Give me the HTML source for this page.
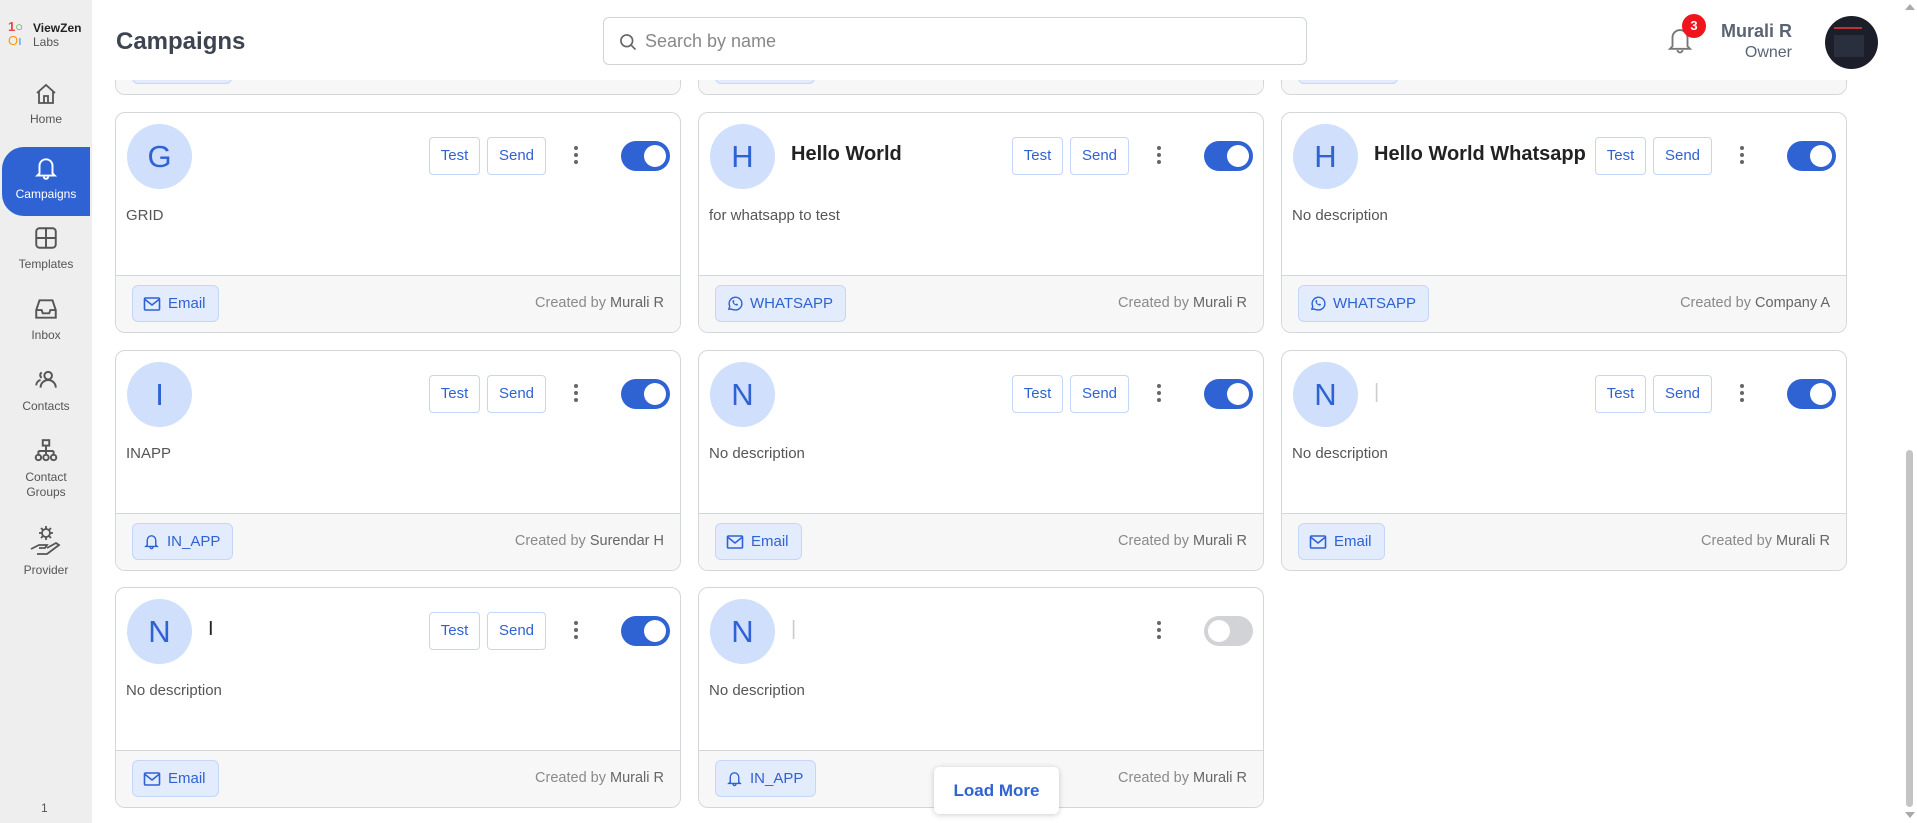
<!DOCTYPE html>
<html><head><meta charset="utf-8">
<style>
*{box-sizing:border-box;margin:0;padding:0}
body{width:1917px;height:823px;overflow:hidden;background:#fff;font-family:"Liberation Sans",sans-serif;position:relative}
.side{position:absolute;left:0;top:0;width:92px;height:823px;background:#eeeeee}
.nav{position:absolute;left:0;width:92px;text-align:center;font-size:12px;color:#555}
.nav svg{display:block;margin:0 auto 6px}
.act{left:2px;width:88px;top:147px;height:69px;background:#2f62d3;color:#fff;border-radius:22px 0 0 22px;padding-top:8px}
.hdr{position:absolute;left:92px;top:0;width:1811px;height:80px;background:#fff;z-index:5}
.card{position:absolute;width:566px;height:221px;border:1px solid #d3d6dc;border-radius:10px;overflow:hidden;background:#fff}
.av{position:absolute;left:11px;top:11px;width:65px;height:65px;border-radius:50%;background:#cfdffc;color:#2f62d3;font-size:31px;text-align:center;line-height:65px}
.tt{position:absolute;left:92px;top:30px;font-size:20px;color:#222;font-weight:bold}
.desc{position:absolute;left:10px;top:94px;font-size:15px;color:#555}
.foot{position:absolute;left:0;bottom:0;width:100%;height:57px;background:#f7f7f8;border-top:1px solid #d3d6dc}
.chip{position:absolute;left:16px;top:9px;height:37px;padding:0 12px 0 10px;background:#e3ecfd;border:1px solid #c5d6f8;border-radius:6px;color:#2f62d3;font-size:15px;line-height:35px;display:flex;align-items:center;gap:7px}
.cb{position:absolute;right:16px;top:19px;font-size:14.5px;color:#8a8a8a}
.cb b{font-weight:normal;color:#666}
.btn{position:absolute;top:24px;height:38px;border:1px solid #c5d6f8;border-radius:4px;color:#2f62d3;font-size:15px;line-height:36px;text-align:center;background:#fff}
.dots{position:absolute;top:33px;width:4px}
.dots i{display:block;width:4px;height:4px;border-radius:50%;background:#666;margin-bottom:3px}
.tg{position:absolute;right:10px;top:28px;width:49px;height:30px;border-radius:15px;background:#2f62d3}
.tg:after{content:"";position:absolute;right:4px;top:4px;width:22px;height:22px;border-radius:50%;background:#fff}
.tg.off{background:#d2d3d6}.tg.off:after{left:4px;right:auto}
</style></head><body>
<div class="side">
 <div style="position:absolute;left:8px;top:20px;font-size:13px;line-height:14px">
  <span style="color:#e44;font-weight:bold">1</span><span style="color:#3a3">○</span><br><span style="color:#f90">O</span><span style="color:#39f">ı</span>
 </div>
 <div style="position:absolute;left:33px;top:21px;font-size:12px;line-height:14px;color:#222"><b>ViewZen</b><br><span style="color:#555">Labs</span></div>
 <div class="nav" style="top:82px"><svg width="26" height="24" viewBox="0 0 24 24" fill="none" stroke="#555" stroke-width="1.8"><path d="M3 11l9-8 9 8M5 9v12h14V9M10 21v-7h4v7"/></svg>Home</div>
 <div class="nav act"><svg width="26" height="26" viewBox="0 0 24 24" fill="none" stroke="#fff" stroke-width="1.8"><path d="M6 17V10a6 6 0 0112 0v7l2 2H4zM10 20a2 2 0 004 0"/></svg>Campaigns</div>
 <div class="nav" style="top:225px"><svg width="26" height="26" viewBox="0 0 24 24" fill="none" stroke="#555" stroke-width="1.8"><rect x="3" y="3" width="18" height="18" rx="3"/><path d="M3 12h18M12 3v18"/></svg>Templates</div>
 <div class="nav" style="top:296px"><svg width="26" height="26" viewBox="0 0 24 24" fill="none" stroke="#555" stroke-width="1.8"><path d="M3 13l3-9h12l3 9v7H3zM3 13h5l1 3h6l1-3h5"/></svg>Inbox</div>
 <div class="nav" style="top:367px"><svg width="26" height="26" viewBox="0 0 24 24" fill="none" stroke="#555" stroke-width="1.8"><circle cx="14" cy="8" r="3.5"/><path d="M7 19a7 7 0 0114 0M8 10a3 3 0 010-5M3 17a5 5 0 014-5"/></svg>Contacts</div>
 <div class="nav" style="top:438px;line-height:15px"><svg width="26" height="26" viewBox="0 0 24 24" fill="none" stroke="#555" stroke-width="1.8"><rect x="9" y="2" width="6" height="5"/><path d="M12 7v5M5 12h14M5 12v3M12 12v3M19 12v3"/><circle cx="5" cy="18" r="2.5"/><circle cx="12" cy="18" r="2.5"/><circle cx="19" cy="18" r="2.5"/></svg>Contact<br>Groups</div>
 <div class="nav" style="top:525px"><svg width="36" height="32" viewBox="0 0 36 32" fill="none" stroke="#555" stroke-width="1.8"><circle cx="18" cy="8" r="4"/><path d="M18 1v3M18 12v3M11 8h3M22 8h3M13 3l2 2M21 11l2 2M13 13l2-2M21 5l2-2M3 24l8-4h8l-2 3h-6M9 29h10l12-9-3-2-9 5"/></svg>Provider</div>
 <div style="position:absolute;left:41px;top:801px;font-size:12px;color:#555">1</div>
</div>

<div class="hdr">
 <div style="position:absolute;left:24px;top:28px;font-size:24px;font-weight:bold;color:#3d4451">Campaigns</div>
 <div style="position:absolute;left:511px;top:17px;width:704px;height:48px;border:1px solid #cfd3da;border-radius:6px">
  <svg style="position:absolute;left:14px;top:14px" width="20" height="20" viewBox="0 0 24 24" fill="none" stroke="#666" stroke-width="2"><circle cx="10.5" cy="10.5" r="7"/><path d="M16 16l5 5"/></svg>
  <span style="position:absolute;left:41px;top:13px;font-size:18px;color:#888">Search by name</span>
 </div>
 <svg style="position:absolute;left:1573px;top:24px" width="30" height="32" viewBox="0 0 24 24" fill="none" stroke="#777" stroke-width="1.5"><path d="M6 17V10a6 6 0 0112 0v7l2 2H4zM10 20a2 2 0 004 0"/></svg>
 <div style="position:absolute;left:1590px;top:14px;width:24px;height:24px;border-radius:50%;background:#f0141c;color:#fff;font-size:13px;font-weight:bold;text-align:center;line-height:24px">3</div>
 <div style="position:absolute;right:111px;top:21px;text-align:right;color:#5a6475"><div style="font-size:18px;font-weight:bold">Murali R</div><div style="font-size:16px;margin-top:2px">Owner</div></div>
 <div style="position:absolute;left:1733px;top:16px;width:53px;height:53px;border-radius:50%;background:#1c1f2a;overflow:hidden"><div style="margin:11px 0 0 9px;width:28px;height:2px;background:#b33"></div><div style="margin:6px 0 0 9px;width:30px;height:22px;background:#2a2f3d"></div></div>
</div>

<div style="position:absolute;left:1903px;top:0;width:14px;height:823px;background:#fff">
 <div style="position:absolute;left:3px;top:450px;width:7px;height:357px;border-radius:4px;background:#c4c4c4"></div>
 <div style="position:absolute;left:2px;top:4px;border:5px solid transparent;border-bottom:6px solid #aaa;border-top:0"></div>
 <div style="position:absolute;left:2px;top:812px;border:5px solid transparent;border-top:6px solid #aaa;border-bottom:0"></div>
</div>

<div class="card" style="left:115px;top:-126px"><div class="foot"><div class="chip" style="width:100px"></div></div></div>
<div class="card" style="left:698px;top:-126px"><div class="foot"><div class="chip" style="width:100px"></div></div></div>
<div class="card" style="left:1281px;top:-126px"><div class="foot"><div class="chip" style="width:100px"></div></div></div>

<div class="card" style="left:115px;top:112px"><div class="av">G</div><div class="desc">GRID</div>
 <div class="btn" style="right:200px;width:51px">Test</div><div class="btn" style="right:134px;width:59px">Send</div><div class="dots" style="right:102px"><i></i><i></i><i></i></div><div class="tg"></div>
 <div class="foot"><div class="chip"><svg width="18" height="16" viewBox="0 0 18 16" fill="none" stroke="#2f62d3" stroke-width="1.6"><rect x="1.5" y="2" width="15" height="12" rx="1"/><path d="M1.5 3l7.5 6 7.5-6"/></svg>Email</div><div class="cb">Created by <b>Murali R</b></div></div></div>
<div class="card" style="left:698px;top:112px"><div class="av">H</div><div class="tt">Hello World</div><div class="desc">for whatsapp to test</div>
 <div class="btn" style="right:200px;width:51px">Test</div><div class="btn" style="right:134px;width:59px">Send</div><div class="dots" style="right:102px"><i></i><i></i><i></i></div><div class="tg"></div>
 <div class="foot"><div class="chip"><svg width="17" height="17" viewBox="0 0 24 24" fill="none" stroke="#2f62d3" stroke-width="2"><path d="M4 20l1.3-4A9 9 0 1112 21a9 9 0 01-4.5-1.2z"/><path d="M9 8c0 4 3 7 7 7l1-2-2-1-1 1c-1.5-.5-2.5-1.5-3-3l1-1-1-2z" fill="#2f62d3" stroke="none"/></svg>WHATSAPP</div><div class="cb">Created by <b>Murali R</b></div></div></div>
<div class="card" style="left:1281px;top:112px"><div class="av">H</div><div class="tt">Hello World Whatsapp</div><div class="desc">No description</div>
 <div class="btn" style="right:200px;width:51px">Test</div><div class="btn" style="right:134px;width:59px">Send</div><div class="dots" style="right:102px"><i></i><i></i><i></i></div><div class="tg"></div>
 <div class="foot"><div class="chip"><svg width="17" height="17" viewBox="0 0 24 24" fill="none" stroke="#2f62d3" stroke-width="2"><path d="M4 20l1.3-4A9 9 0 1112 21a9 9 0 01-4.5-1.2z"/><path d="M9 8c0 4 3 7 7 7l1-2-2-1-1 1c-1.5-.5-2.5-1.5-3-3l1-1-1-2z" fill="#2f62d3" stroke="none"/></svg>WHATSAPP</div><div class="cb">Created by <b>Company A</b></div></div></div>

<div class="card" style="left:115px;top:350px"><div class="av">I</div><div class="desc">INAPP</div>
 <div class="btn" style="right:200px;width:51px">Test</div><div class="btn" style="right:134px;width:59px">Send</div><div class="dots" style="right:102px"><i></i><i></i><i></i></div><div class="tg"></div>
 <div class="foot"><div class="chip"><svg width="17" height="17" viewBox="0 0 24 24" fill="none" stroke="#2f62d3" stroke-width="2"><path d="M6 17V10a6 6 0 0112 0v7l2 2H4zM10 20a2 2 0 004 0"/></svg>IN_APP</div><div class="cb">Created by <b>Surendar H</b></div></div></div>
<div class="card" style="left:698px;top:350px"><div class="av">N</div><div class="desc">No description</div>
 <div class="btn" style="right:200px;width:51px">Test</div><div class="btn" style="right:134px;width:59px">Send</div><div class="dots" style="right:102px"><i></i><i></i><i></i></div><div class="tg"></div>
 <div class="foot"><div class="chip"><svg width="18" height="16" viewBox="0 0 18 16" fill="none" stroke="#2f62d3" stroke-width="1.6"><rect x="1.5" y="2" width="15" height="12" rx="1"/><path d="M1.5 3l7.5 6 7.5-6"/></svg>Email</div><div class="cb">Created by <b>Murali R</b></div></div></div>
<div class="card" style="left:1281px;top:350px"><div class="av">N</div><div class="tt" style="color:#ccc;font-weight:normal">|</div><div class="desc">No description</div>
 <div class="btn" style="right:200px;width:51px">Test</div><div class="btn" style="right:134px;width:59px">Send</div><div class="dots" style="right:102px"><i></i><i></i><i></i></div><div class="tg"></div>
 <div class="foot"><div class="chip"><svg width="18" height="16" viewBox="0 0 18 16" fill="none" stroke="#2f62d3" stroke-width="1.6"><rect x="1.5" y="2" width="15" height="12" rx="1"/><path d="M1.5 3l7.5 6 7.5-6"/></svg>Email</div><div class="cb">Created by <b>Murali R</b></div></div></div>

<div class="card" style="left:115px;top:587px"><div class="av">N</div><div class="tt" style="font-weight:normal">I</div><div class="desc">No description</div>
 <div class="btn" style="right:200px;width:51px">Test</div><div class="btn" style="right:134px;width:59px">Send</div><div class="dots" style="right:102px"><i></i><i></i><i></i></div><div class="tg"></div>
 <div class="foot"><div class="chip"><svg width="18" height="16" viewBox="0 0 18 16" fill="none" stroke="#2f62d3" stroke-width="1.6"><rect x="1.5" y="2" width="15" height="12" rx="1"/><path d="M1.5 3l7.5 6 7.5-6"/></svg>Email</div><div class="cb">Created by <b>Murali R</b></div></div></div>
<div class="card" style="left:698px;top:587px"><div class="av">N</div><div class="tt" style="color:#ccc;font-weight:normal">|</div><div class="desc">No description</div>
 <div class="dots" style="right:102px"><i></i><i></i><i></i></div><div class="tg off"></div>
 <div class="foot"><div class="chip"><svg width="17" height="17" viewBox="0 0 24 24" fill="none" stroke="#2f62d3" stroke-width="2"><path d="M6 17V10a6 6 0 0112 0v7l2 2H4zM10 20a2 2 0 004 0"/></svg>IN_APP</div><div class="cb">Created by <b>Murali R</b></div></div></div>

<div style="position:absolute;left:934px;top:767px;width:125px;height:47px;background:#fff;border-radius:5px;box-shadow:0 1px 6px rgba(0,0,0,.2);color:#2f62d3;font-size:17px;font-weight:bold;text-align:center;line-height:47px;z-index:6">Load More</div>
</body></html>
